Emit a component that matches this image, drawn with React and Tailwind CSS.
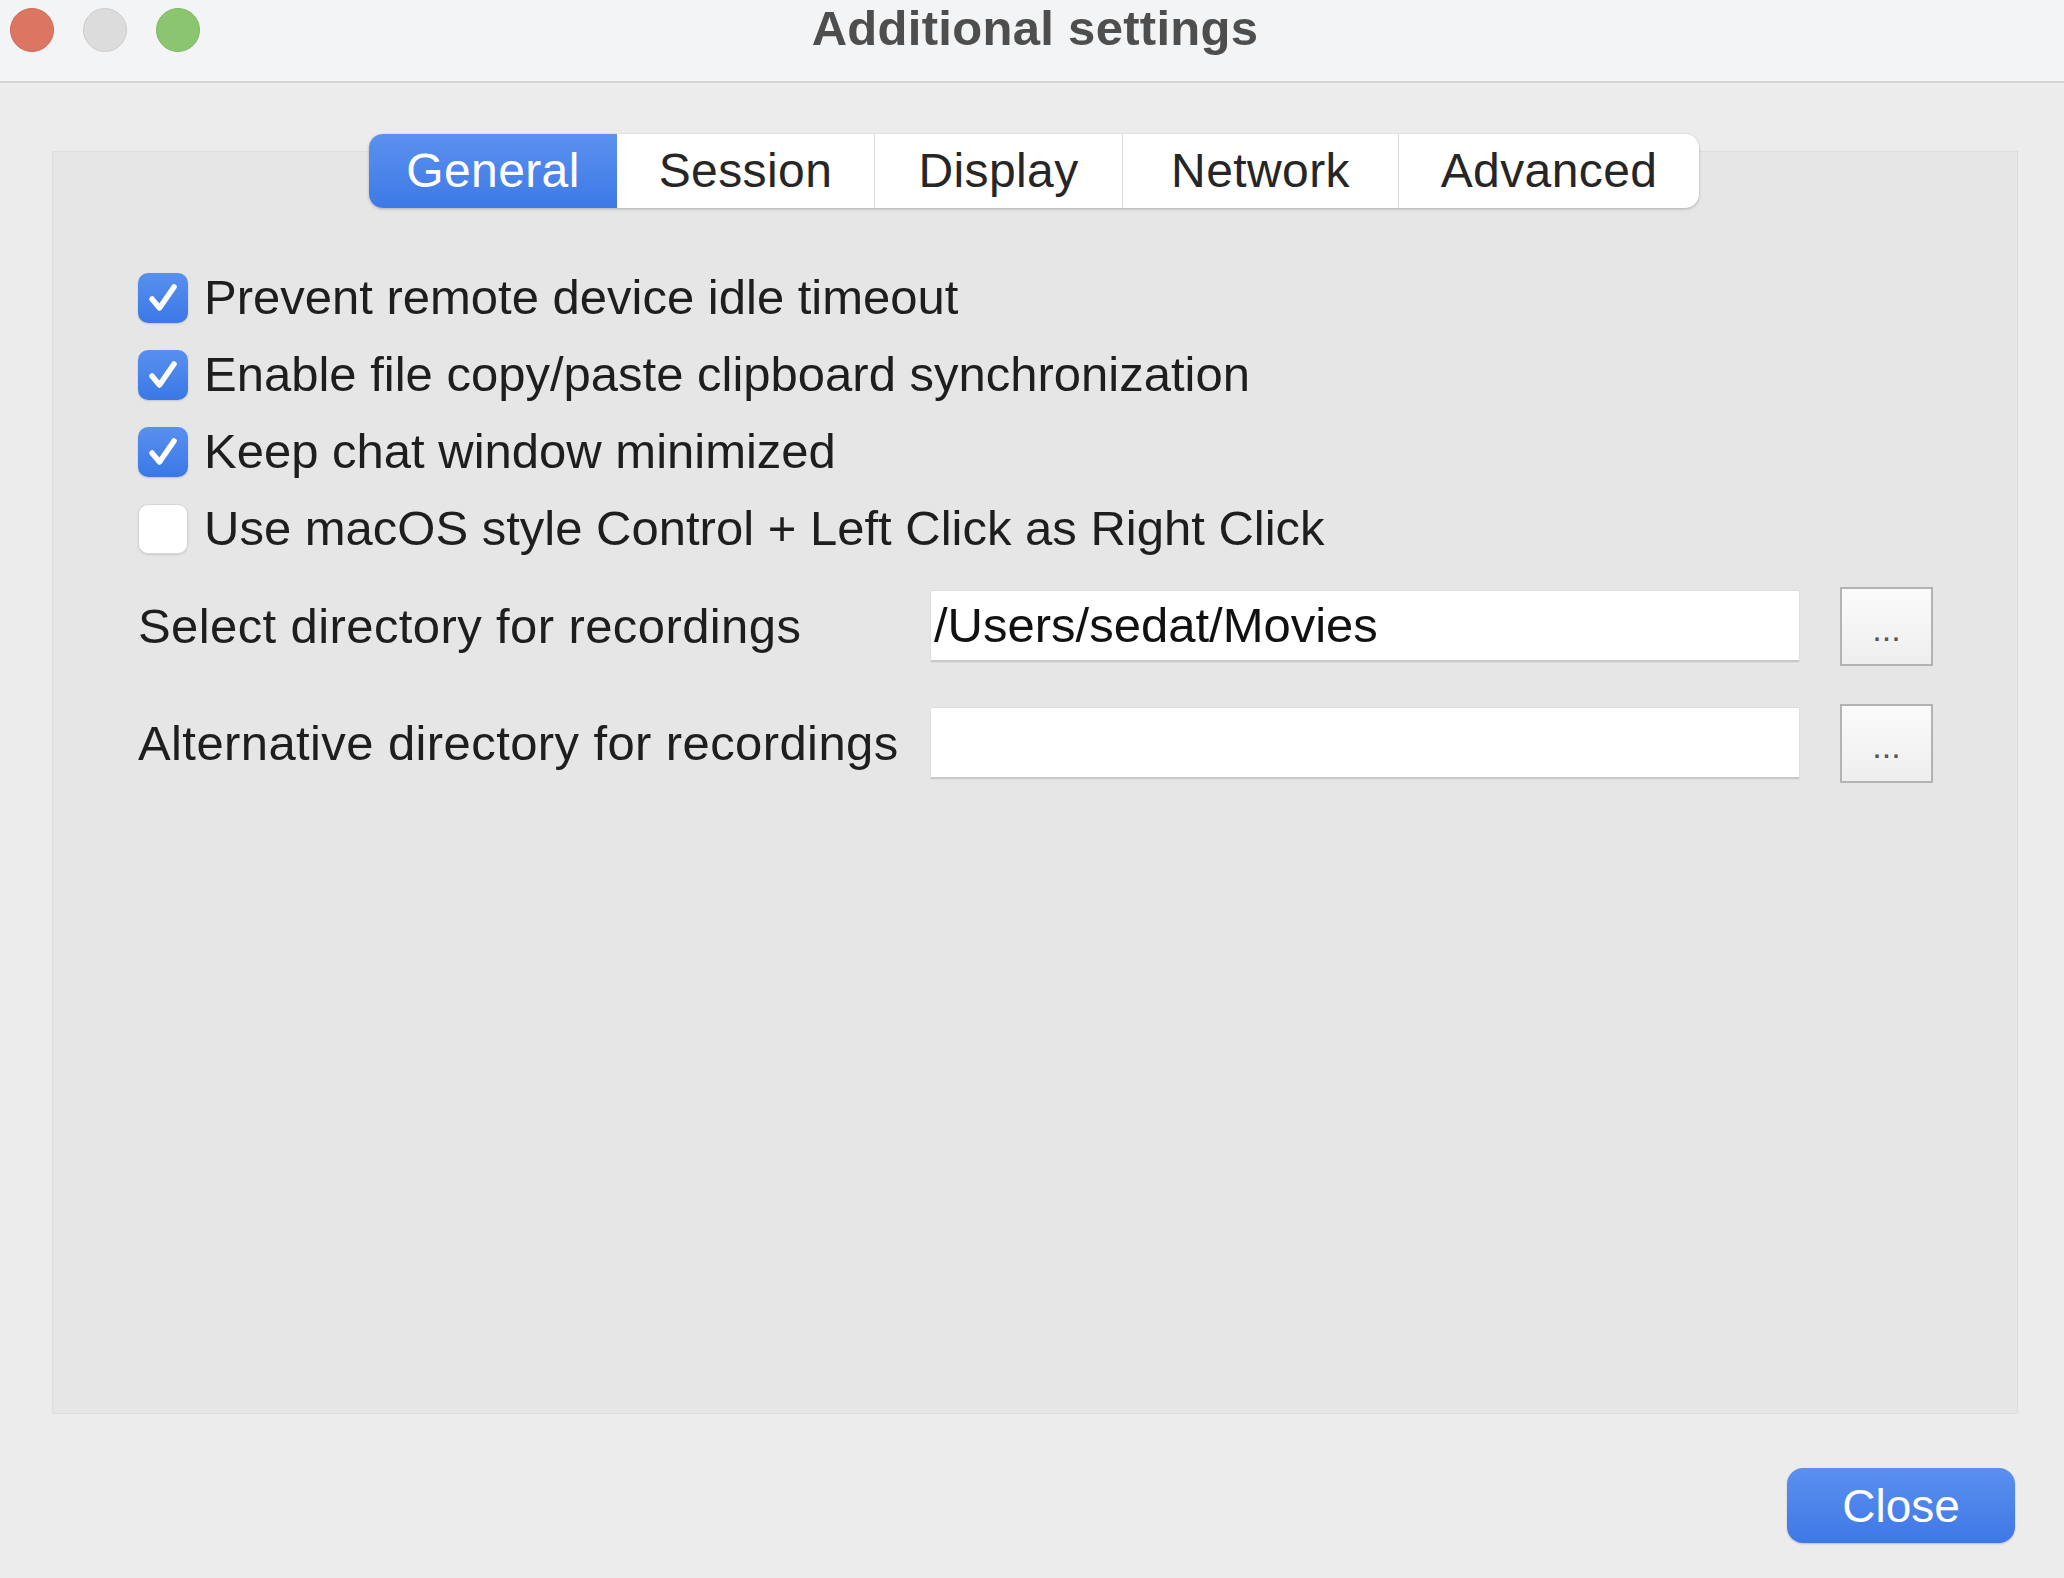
import React, { useState } from 'react';

const TABS = ['General', 'Session', 'Display', 'Network', 'Advanced'];
const TAB_WIDTHS = ['w-[248px]', 'w-[257px]', 'w-[248px]', 'w-[276px]', 'w-[301px]'];

const OPTIONS = [
  { label: 'Prevent remote device idle timeout', checked: true },
  { label: 'Enable file copy/paste clipboard synchronization', checked: true },
  { label: 'Keep chat window minimized', checked: true },
  { label: 'Use macOS style Control + Left Click as Right Click', checked: false },
];

const Checkbox = ({ checked, onClick }) => (
  <button
    onClick={onClick}
    className={`w-[50px] h-[50px] rounded-[10px] flex items-center justify-center shrink-0 ${
      checked
        ? 'bg-gradient-to-b from-[#5790ef] to-[#3b78e6] shadow-[0_1px_2px_rgba(0,0,0,0.15)]'
        : 'bg-white border border-[#d6d6d6] shadow-[0_1px_2px_rgba(0,0,0,0.12)]'
    }`}
  >
    {checked && (
      <svg width="40" height="40" viewBox="0 0 40 40" fill="none">
        <path d="M9 21 L16.5 30 L31 9" stroke="white" strokeWidth="5.5" strokeLinecap="round" strokeLinejoin="round" />
      </svg>
    )}
  </button>
);

const DirRow = ({ label, value }) => (
  <div className="flex items-center h-[79px]">
    <div className="w-[793px] text-[49px] tracking-[0.4px] text-[#1e1e1e] leading-none">{label}</div>
    <div className="w-[868px] h-[71px] bg-white border-b-2 border-[#c9c9c9] shadow-[0_0_1px_rgba(0,0,0,0.2)] flex items-center pl-[3px] text-[49px] text-[#111] leading-none">
      {value}
    </div>
    <button className="ml-[41px] w-[93px] h-[79px] border-2 border-[#b3b3b3] bg-gradient-to-b from-[#fbfbfb] to-[#eeeeee] flex items-end justify-center text-[34px] text-[#555] pb-[18px] leading-none">
      ...
    </button>
  </div>
);

export default function App() {
  const [tab, setTab] = useState('General');
  const [opts, setOpts] = useState(OPTIONS.map((o) => o.checked));

  return (
    <div className="w-[2064px] h-[1578px] bg-[#ececec] flex flex-col overflow-hidden" style={{ fontFamily: '"Liberation Sans", Arial, sans-serif' }}>
      {/* Title bar */}
      <div className="relative h-[83px] shrink-0 bg-[#f3f4f5] border-b-2 border-[#d4d4d4] flex items-center justify-center">
        <div className="absolute left-[10px] top-[8px] flex gap-[29px]">
          <div className="w-[44px] h-[44px] rounded-full bg-[#dc7561] border border-[#cf6a56]" />
          <div className="w-[44px] h-[44px] rounded-full bg-[#dcdcdd] border border-[#cdcdcd]" />
          <div className="w-[44px] h-[44px] rounded-full bg-[#8cc56f] border border-[#7fb963]" />
        </div>
        <div className="text-[49px] tracking-[0.3px] font-bold text-[#4e4e4e] -mt-[24px] ml-[6px]">Additional settings</div>
      </div>

      {/* Body */}
      <div className="flex flex-col pt-[51px]">
        <div className="relative z-10 self-center ml-[4px] flex h-[74px] bg-white rounded-[14px] shadow-[0_1px_3px_rgba(0,0,0,0.25)] overflow-hidden">
          {TABS.map((t, i) => (
            <button
              key={t}
              onClick={() => setTab(t)}
              className={`${TAB_WIDTHS[i]} h-full flex items-center justify-center text-[48px] tracking-[0.4px] leading-none ${
                tab === t
                  ? 'bg-gradient-to-b from-[#5b91ef] to-[#3d79e6] text-white'
                  : 'text-[#262626]'
              } ${i > 0 && tab !== t && tab !== TABS[i - 1] ? 'border-l border-[#dadada]' : ''}`}
            >
              {t}
            </button>
          ))}
        </div>

        <div className="-mt-[57px] ml-[52px] w-[1966px] h-[1263px] bg-[#e6e6e6] border border-[#dedede] pt-[107px] pl-[85px]">
          <div className="flex flex-col">
            {OPTIONS.map((o, i) => (
              <div key={o.label} className="flex items-center h-[77px] gap-[16px]">
                <Checkbox
                  checked={opts[i]}
                  onClick={() => setOpts(opts.map((v, j) => (j === i ? !v : v)))}
                />
                <span className="text-[49px] text-[#1e1e1e] leading-none">{o.label}</span>
              </div>
            ))}
          </div>
          <div className="mt-[20px] flex flex-col gap-[38px]">
            <DirRow label="Select directory for recordings" value="/Users/sedat/Movies" />
            <DirRow label="Alternative directory for recordings" value="" />
          </div>
        </div>

        <div className="flex justify-end pr-[49px] mt-[54px]">
          <button className="w-[228px] h-[75px] rounded-[16px] bg-gradient-to-b from-[#5b90ef] to-[#3e78e6] text-white text-[46px] leading-none shadow-[0_1px_2px_rgba(0,0,0,0.2)]">
            Close
          </button>
        </div>
      </div>
    </div>
  );
}
